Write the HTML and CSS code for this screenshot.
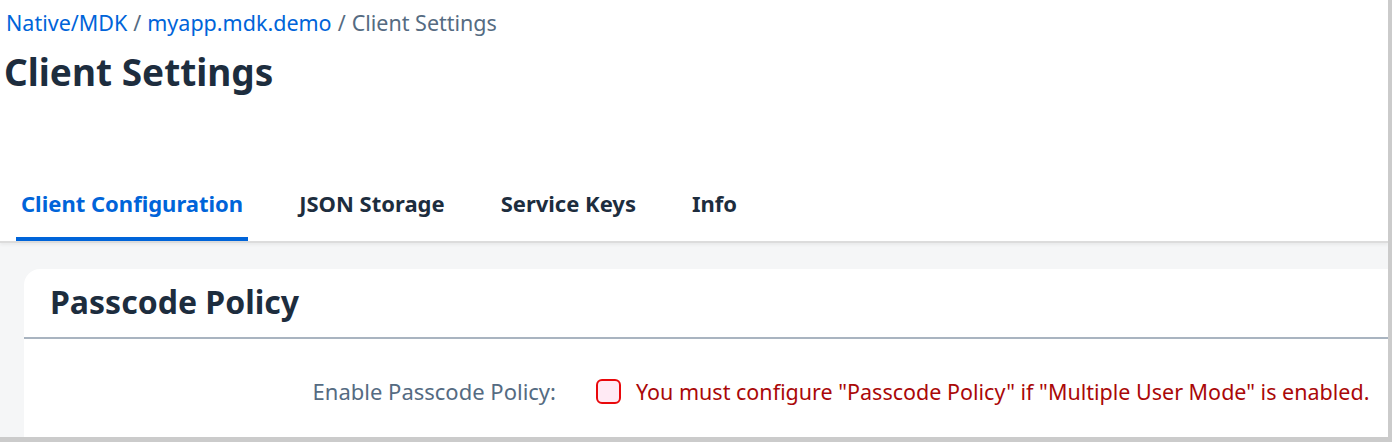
FILE: index.html
```html
<!DOCTYPE html>
<html lang="en">
<head>
<meta charset="utf-8">
<title>Client Settings</title>
<link rel="stylesheet" href="styles.css">
</head>
<body>
<div class="page">
  <header class="page-header">
    <nav class="breadcrumb">
      <a class="crumb-link" href="#">Native/MDK</a>
      <span class="crumb-sep">/</span>
      <a class="crumb-link" href="#">myapp.mdk.demo</a>
      <span class="crumb-sep">/</span>
      <span class="crumb-current">Client Settings</span>
    </nav>
    <h1 class="page-title">Client Settings</h1>
  </header>

  <div class="tabbar">
    <ul class="tabs">
      <li class="tab tab-active">Client Configuration</li>
      <li class="tab">JSON Storage</li>
      <li class="tab">Service Keys</li>
      <li class="tab">Info</li>
    </ul>
  </div>

  <main class="content">
    <section class="card">
      <div class="card-header">
        <h2 class="card-title">Passcode Policy</h2>
      </div>
      <div class="card-body">
        <div class="form-row">
          <label class="form-label">Enable Passcode Policy:</label>
          <div class="form-field">
            <span class="checkbox"></span>
            <span class="error-text">You must configure "Passcode Policy" if "Multiple User Mode" is enabled.</span>
          </div>
        </div>
      </div>
    </section>
  </main>
</div>
</body>
</html>
```

FILE: styles.css
```css
html, body {
  margin: 0;
  padding: 0;
}

body {
  background: #cbcbcb;
  font-family: "Noto Sans", "Open Sans", sans-serif;
  width: 1392px;
  height: 442px;
  overflow: hidden;
}

.page {
  width: 1388px;
  height: 437px;
  background: #ffffff;
  overflow: hidden;
  display: flex;
  flex-direction: column;
}

.page-header {
  padding: 8px 0 0 6px;
  height: 173px;
  box-sizing: border-box;
}

.breadcrumb {
  font-size: 21.5px;
  line-height: 30px;
  color: #556b82;
  display: flex;
  gap: 6px;
}

.crumb-link {
  color: #0064d9;
  text-decoration: none;
}

.crumb-current {
  color: #556b82;
}

.page-title {
  margin: 10px 0 0 -2px;
  font-size: 37px;
  line-height: 48px;
  font-weight: 700;
  color: #1d2d3e;
}

.tabbar {
  height: 68px;
  border-bottom: 2px solid #dcdcdc;
  box-shadow: 0 2px 3px rgba(0, 0, 0, 0.05);
  position: relative;
  z-index: 1;
}

.tabs {
  list-style: none;
  margin: 0;
  padding: 0 0 0 16px;
  display: flex;
  gap: 46px;
  height: 100%;
}

.tab {
  padding: 0 5px;
  font-size: 22px;
  font-weight: 700;
  color: #1d2d3e;
  display: flex;
  align-items: center;
  box-sizing: border-box;
  height: 100%;
  padding-bottom: 5px;
  border-bottom: 4px solid transparent;
  margin-bottom: -2px;
}

.tab-active {
  color: #0064d9;
  border-bottom-color: #0064d9;
  border-radius: 4px 4px 0 0;
}

.content {
  flex: 1;
  background: #f5f6f7;
  padding: 26px 0 0 24px;
}

.card {
  background: #ffffff;
  border-top-left-radius: 16px;
  height: 100%;
}

.card-header {
  height: 70px;
  box-sizing: border-box;
  border-bottom: 2px solid #a9b4c0;
  display: flex;
  align-items: center;
  padding-left: 26px;
  padding-bottom: 4px;
}

.card-title {
  margin: 0;
  font-size: 32px;
  font-weight: 700;
  color: #1d2d3e;
}

.card-body {
  padding-top: 37px;
}

.form-row {
  display: flex;
  align-items: center;
}

.form-label {
  width: 532px;
  text-align: right;
  font-size: 22px;
  color: #556b82;
  padding-right: 40px;
  box-sizing: content-box;
}

.form-field {
  display: flex;
  align-items: center;
  gap: 15px;
}

.checkbox {
  width: 25px;
  height: 25px;
  box-sizing: border-box;
  border: 2px solid #e9080b;
  border-radius: 6px;
  background: #ffeaf4;
}

.error-text {
  font-size: 21.5px;
  color: #aa0808;
}
```
